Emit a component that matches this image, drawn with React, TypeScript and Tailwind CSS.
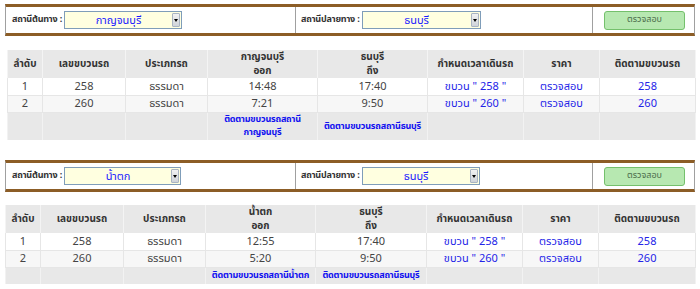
import React from "react";

const FONT = { fontFamily: '"Noto Sans Thai", Tahoma, "Noto Sans", "DejaVu Sans", sans-serif' };

function SelectBox({ value, w }: { value: string; w: string }) {
  return (
    <div className={`relative flex h-[18px] ${w} items-center border border-[#7f9db9] bg-[#ffffe0]`}>
      <span className="flex-1 text-center text-[11px] leading-none text-[#1a1aff]">{value}</span>
      <div className="mr-[1px] flex h-[14px] w-[8px] items-center justify-center rounded-[1px] border border-[#a9b4c2] bg-gradient-to-b from-[#f2f2f2] to-[#cfd3d9]">
        <div className="h-0 w-0 border-x-[2px] border-t-[3px] border-x-transparent border-t-black" />
      </div>
    </div>
  );
}

function Bar({ from, to, w1, w2 }: { from: string; to: string; w1: string; w2: string }) {
  return (
    <div className="ml-[5px] flex h-[32px] w-[690px] border-y-[3px] border-x border-y-[#8c5d26] border-x-[#a0a0a0] bg-white">
      <div className="flex w-[290px] items-center border-r border-[#a0a0a0] pl-[6px]">
        <span className="mr-[2px] whitespace-nowrap text-[9px] font-bold tracking-[-0.2px] text-[#333]">สถานีต้นทาง :</span>
        <SelectBox value={from} w={w1} />
      </div>
      <div className="flex w-[297px] items-center border-r border-[#a0a0a0] pl-[5px]">
        <span className="mr-[2px] whitespace-nowrap text-[9px] font-bold tracking-[-0.2px] text-[#333]">สถานีปลายทาง :</span>
        <SelectBox value={to} w={w2} />
      </div>
      <div className="flex flex-1 items-center pl-[11px]">
        <div className="flex h-[19px] w-[81px] items-center justify-center rounded-[3px] border border-[#74c06c] bg-[#b7e8b1] text-[9px] text-[#4d6e4d]">
          ตรวจสอบ
        </div>
      </div>
    </div>
  );
}

type Row = { no: string; train: string; type: string; dep: string; arr: string };

function Table({
  origin,
  rows,
  cols,
  footerA,
  footerB,
  footerH,
  ml,
}: {
  origin: string;
  rows: Row[];
  cols: number[];
  footerA: React.ReactNode;
  footerB: string;
  footerH: string;
  ml: string;
}) {
  const total = cols.reduce((a, b) => a + b, 0);
  const th = "border-x border-[#f4f4f4] p-0 text-center align-middle text-[10px] font-bold leading-[14px] text-[#333]";
  const td = "border-x border-[#e6e6e6] p-0 text-center align-middle text-[11px] leading-none text-[#444]";
  const link = "text-[#2424e8]";
  const ft = "border-x border-[#f2f2f2] p-0 text-center align-middle text-[9px] font-bold leading-[13px] tracking-[-0.2px] text-[#1010f0] whitespace-nowrap";
  return (
    <table className={`${ml} table-fixed border-collapse`} style={{ width: total }}>
      <colgroup>
        {cols.map((c, i) => (
          <col key={i} style={{ width: c }} />
        ))}
      </colgroup>
      <thead>
        <tr className="h-[28px] bg-[#e8e8e8]">
          <th className={th}>ลำดับ</th>
          <th className={th}>เลขขบวนรถ</th>
          <th className={th}>ประเภทรถ</th>
          <th className={th}>
            {origin}
            <br />
            ออก
          </th>
          <th className={th}>
            ธนบุรี
            <br />
            ถึง
          </th>
          <th className={th}>กำหนดเวลาเดินรถ</th>
          <th className={th}>ราคา</th>
          <th className={th}>ติดตามขบวนรถ</th>
        </tr>
      </thead>
      <tbody>
        {rows.map((r, i) => (
          <tr key={i} className={`h-[17px] border-b border-[#e6e6e6] ${i % 2 === 0 ? "bg-white" : "bg-[#f7f7f7]"}`}>
            <td className={td}>{r.no}</td>
            <td className={td}>{r.train}</td>
            <td className={`${td} text-[10px]`}>ธรรมดา</td>
            <td className={td}>{r.dep}</td>
            <td className={td}>{r.arr}</td>
            <td className={`${td} ${link} text-[10px]`}>ขบวน " {r.train} "</td>
            <td className={`${td} ${link} text-[10px]`}>ตรวจสอบ</td>
            <td className={`${td} ${link}`}>{r.train}</td>
          </tr>
        ))}
        <tr className={`${footerH} bg-[#e8e8e8]`}>
          <td className="border-x border-[#f2f2f2]" />
          <td className="border-x border-[#f2f2f2]" />
          <td className="border-x border-[#f2f2f2]" />
          <td className={ft}>{footerA}</td>
          <td className={ft}>{footerB}</td>
          <td className="border-x border-[#f2f2f2]" />
          <td className="border-x border-[#f2f2f2]" />
          <td className="border-x border-[#f2f2f2]" />
        </tr>
      </tbody>
    </table>
  );
}

export default function App() {
  return (
    <div className="h-[289px] w-[700px] overflow-hidden bg-white pt-[4px]" style={FONT}>
      <Bar from="กาญจนบุรี" to="ธนบุรี" w1="w-[118px]" w2="w-[119px]" />
      <div className="h-[14px]" />
      <Table
        origin="กาญจนบุรี"
        ml="ml-[7px]"
        cols={[35, 83, 82, 110, 110, 96, 76, 96]}
        rows={[
          { no: "1", train: "258", type: "ธรรมดา", dep: "14:48", arr: "17:40" },
          { no: "2", train: "260", type: "ธรรมดา", dep: "7:21", arr: "9:50" },
        ]}
        footerA={
          <>
            ติดตามขบวนรถสถานี
            <br />
            กาญจนบุรี
          </>
        }
        footerB="ติดตามขบวนรถสถานีธนบุรี"
        footerH="h-[28px]"
      />
      <div className="h-[20px]" />
      <Bar from="น้ำตก" to="ธนบุรี" w1="w-[117px]" w2="w-[118px]" />
      <div className="h-[13px]" />
      <Table
        origin="น้ำตก"
        ml="ml-[5px]"
        cols={[35, 83, 82, 110, 111, 96, 76, 97]}
        rows={[
          { no: "1", train: "258", type: "ธรรมดา", dep: "12:55", arr: "17:40" },
          { no: "2", train: "260", type: "ธรรมดา", dep: "5:20", arr: "9:50" },
        ]}
        footerA="ติดตามขบวนรถสถานีน้ำตก"
        footerB="ติดตามขบวนรถสถานีธนบุรี"
        footerH="h-[17px]"
      />
    </div>
  );
}
